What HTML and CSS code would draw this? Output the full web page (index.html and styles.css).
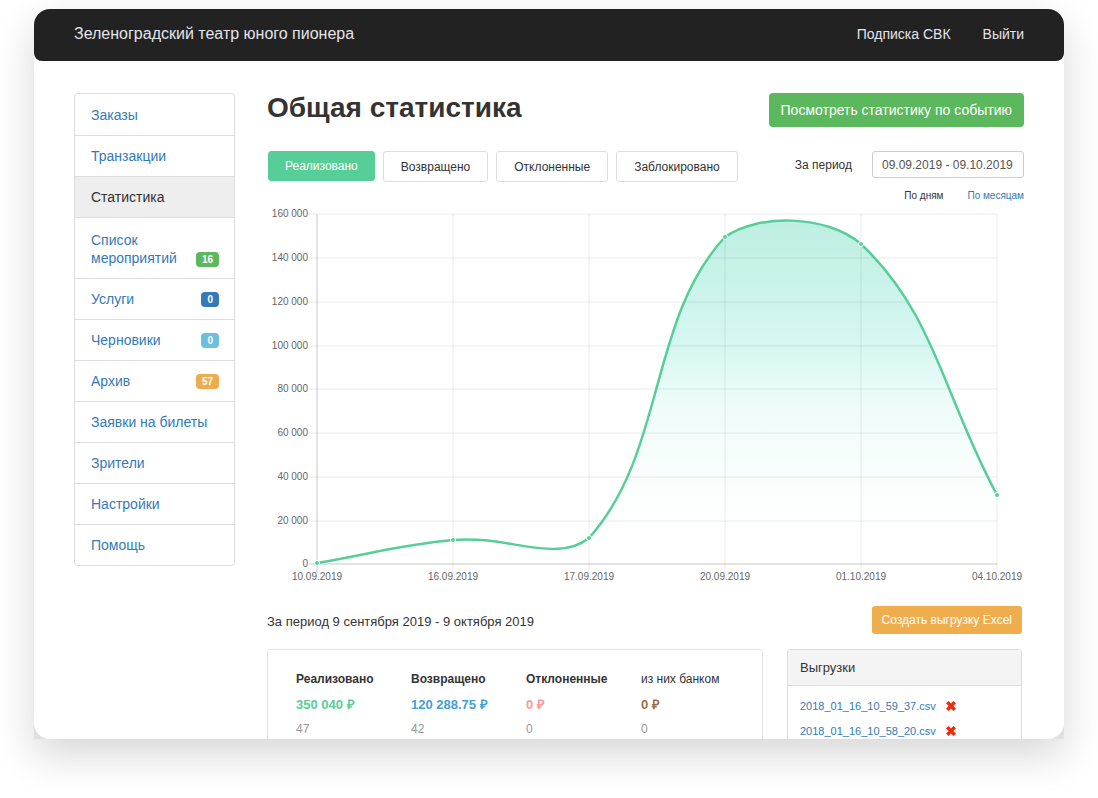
FILE: index.html
```
<!DOCTYPE html>
<html lang="ru">

<head>
    <meta charset="UTF-8">
    <meta name="viewport" content="width=device-width, initial-scale=1.0">
    <title>Общая статистика</title>
    <link rel="stylesheet" href="styles.css">
</head>

<body>
    <div class="window">
        <div class="page">
            <header class="topbar">
                <a class="brand" href="#">Зеленоградский театр юного пионера</a>
                <nav class="topbar-nav">
                    <a href="#">Подписка СВК</a>
                    <a href="#">Выйти</a>
                </nav>
            </header>

            <div class="content">
                <nav class="sidebar">
                    <a href="#">Заказы</a>
                    <a href="#">Транзакции</a>
                    <a class="active" href="#">Статистика</a>
                    <a class="tall" href="#">Список мероприятий <span class="badge green">16</span></a>
                    <a href="#">Услуги <span class="badge blue">0</span></a>
                    <a href="#">Черновики <span class="badge cyan">0</span></a>
                    <a href="#">Архив <span class="badge orange">57</span></a>
                    <a href="#">Заявки на билеты</a>
                    <a href="#">Зрители</a>
                    <a href="#">Настройки</a>
                    <a href="#">Помощь</a>
                </nav>

                <main class="main">
                    <div class="title-row">
                        <h1>Общая статистика</h1>
                        <button class="btn-event" type="button">Посмотреть статистику по событию</button>
                    </div>

                    <div class="filters">
                        <div class="tabs">
                            <button class="tab active" type="button">Реализовано</button>
                            <button class="tab" type="button">Возвращено</button>
                            <button class="tab" type="button">Отклоненные</button>
                            <button class="tab" type="button">Заблокировано</button>
                        </div>
                        <div class="period">
                            <label for="period">За период</label>
                            <input type="text" id="period" value="09.09.2019 - 09.10.2019">
                        </div>
                    </div>

                    <div class="scale">
                        <span>По дням</span>
                        <a href="#">По месяцам</a>
                    </div>

                    <svg class="chart" viewBox="0 0 757 382">
                        <defs>
                            <linearGradient id="fill" gradientUnits="userSpaceOnUse" x1="0" y1="10" x2="0" y2="320">
                                <stop offset="0" stop-color="#bdeee1" />
                                <stop offset="0.4" stop-color="#d4f7f1" />
                                <stop offset="0.62" stop-color="#effcf9" />
                                <stop offset="1" stop-color="#ffffff" />
                            </linearGradient>
                        </defs>
                        <path class="area" fill="url(#fill)" d="M50 358C104 349 131 340 186 335C240 330 290 359 322 333C399 247 381 115 458 32C490 9 559 9 594 39C668 109 676 190 730 290V359H50Z" />
                        <g class="grid">
                            <path d="M42 9H730M42 53H730M42 97H730M42 141H730M42 184H730M42 228H730M42 272H730M42 316H730" />
                            <path d="M186 9V367M322 9V367M458 9V367M594 9V367M730 9V367" />
                        </g>
                        <path class="axis" d="M50 9V367M42 359H730" />
                        <path class="line" d="M50 358C104 349 131 340 186 335C240 330 290 359 322 333C399 247 381 115 458 32C490 9 559 9 594 39C668 109 676 190 730 290" />
                        <g class="dots">
                            <circle cx="50" cy="358" r="2.5" />
                            <circle cx="186" cy="335" r="2.5" />
                            <circle cx="322" cy="333" r="2.5" />
                            <circle cx="458" cy="32" r="2.5" />
                            <circle cx="594" cy="39" r="2.5" />
                            <circle cx="730" cy="290" r="2.5" />
                        </g>
                        <g class="labels-y">
                            <text x="41" y="12">160 000</text>
                            <text x="41" y="56">140 000</text>
                            <text x="41" y="100">120 000</text>
                            <text x="41" y="144">100 000</text>
                            <text x="41" y="187">80 000</text>
                            <text x="41" y="231">60 000</text>
                            <text x="41" y="275">40 000</text>
                            <text x="41" y="319">20 000</text>
                            <text x="41" y="362">0</text>
                        </g>
                        <g class="labels-x">
                            <text x="50" y="375">10.09.2019</text>
                            <text x="186" y="375">16.09.2019</text>
                            <text x="322" y="375">17.09.2019</text>
                            <text x="458" y="375">20.09.2019</text>
                            <text x="594" y="375">01.10.2019</text>
                            <text x="730" y="375">04.10.2019</text>
                        </g>
                    </svg>

                    <div class="summary-head">
                        <h2>За период 9 сентября 2019 - 9 октября 2019</h2>
                        <button class="btn-excel" type="button">Создать выгрузку Excel</button>
                    </div>

                    <div class="summary">
                        <div class="totals">
                            <table>
                                <thead>
                                    <tr>
                                        <th>Реализовано</th>
                                        <th>Возвращено</th>
                                        <th>Отклоненные</th>
                                        <th class="light">из них банком</th>
                                    </tr>
                                </thead>
                                <tbody>
                                    <tr class="sums">
                                        <td class="sold">350 040 ₽</td>
                                        <td class="returned">120 288.75 ₽</td>
                                        <td class="declined">0 ₽</td>
                                        <td class="bank">0 ₽</td>
                                    </tr>
                                    <tr class="counts">
                                        <td>47</td>
                                        <td>42</td>
                                        <td>0</td>
                                        <td>0</td>
                                    </tr>
                                </tbody>
                            </table>
                        </div>

                        <section class="exports">
                            <h3>Выгрузки</h3>
                            <ul>
                                <li>
                                    <a href="#">2018_01_16_10_59_37.csv</a>
                                    <button class="remove" type="button" aria-label="Удалить">
                                        <svg viewBox="0 0 10 10"><path d="M2.6 0L5 2.5L7.4 0L10 2.3L7.4 5L10 7.7L7.4 10L5 7.5L2.6 10L0 7.7L2.6 5L0 2.3Z" /></svg>
                                    </button>
                                </li>
                                <li>
                                    <a href="#">2018_01_16_10_58_20.csv</a>
                                    <button class="remove" type="button" aria-label="Удалить">
                                        <svg viewBox="0 0 10 10"><path d="M2.6 0L5 2.5L7.4 0L10 2.3L7.4 5L10 7.7L7.4 10L5 7.5L2.6 10L0 7.7L2.6 5L0 2.3Z" /></svg>
                                    </button>
                                </li>
                            </ul>
                        </section>
                    </div>
                </main>
            </div>
        </div>
    </div>
</body>

</html>
```

FILE: styles.css
```
* {
    box-sizing: border-box;
}

body {
    margin: 0;
    padding: 9px 34px 59px;
    height: 100vh;
    overflow: hidden;
    background: #fff;
    color: #333;
    font-family: "Liberation Sans", Arial, sans-serif;
    font-size: 14px;
}

a {
    color: #337ab7;
    text-decoration: none;
}

button,
input {
    font-family: inherit;
}

button {
    border: none;
    cursor: pointer;
}

.window {
    height: 100%;
    border-radius: 16px 16px 0 0;
    background: #e0e0e0;
    box-shadow: 0 16px 40px rgba(0, 0, 0, 0.16);
}

.page {
    height: 100%;
    overflow: hidden;
    border-radius: 16px;
    background: #fff;
}

.topbar {
    display: flex;
    justify-content: space-between;
    align-items: center;
    height: 52px;
    padding: 0 40px 3px;
    border-radius: 0 0 8px 8px;
    background: #222;
}

.topbar a {
    color: #e4e4ea;
}

.brand {
    font-size: 16px;
}

.topbar-nav {
    display: flex;
    gap: 32px;
}

.content {
    display: grid;
    grid-template-columns: 161px 1fr;
    align-items: start;
    gap: 32px;
    padding: 32px 40px;
}

/* sidebar */
.sidebar {
    padding-top: 1px;
    border: 1px solid #ddd;
    border-radius: 4px;
}

.sidebar a {
    display: flex;
    justify-content: space-between;
    align-items: center;
    height: 41px;
    padding: 0 15px 0 16px;
    border-bottom: 1px solid #ddd;
    line-height: 18px;
}

.sidebar a:last-child {
    height: 40px;
    border-bottom: none;
}

.sidebar .active {
    background: #eee;
    color: #333;
}

.sidebar .tall {
    align-items: flex-end;
    height: 61px;
    padding-bottom: 11px;
}

.badge {
    padding: 0 6px;
    border-radius: 4px;
    color: #fff;
    font-size: 10px;
    font-weight: bold;
    line-height: 15px;
}

.green {
    background: #5cb85c;
}

.blue {
    background: #337ab7;
}

.cyan {
    background: #6cbfdd;
}

.orange {
    background: #ebad50;
}

/* heading and filters */
.title-row {
    display: flex;
    justify-content: space-between;
    align-items: flex-start;
    height: 58px;
}

h1 {
    margin: 0;
    font-size: 28px;
    line-height: 30px;
}

.btn-event {
    height: 34px;
    padding: 0 12px;
    border-radius: 4px;
    background: #5cb85c;
    color: #fff;
    font-size: 14px;
}

.filters {
    display: flex;
    justify-content: space-between;
    align-items: flex-start;
}

.tabs {
    display: flex;
    align-items: flex-start;
    gap: 8px;
    padding-left: 1px;
}

.tab {
    height: 31px;
    padding: 0 17px;
    border: 1px solid #ddd;
    border-radius: 3px;
    background: #fff;
    color: #333;
    font-size: 12px;
}

.tab.active {
    height: 30px;
    padding: 0 16px;
    border-color: #57ce98;
    background: #57ce98;
    color: #fff;
}

.period {
    display: flex;
    align-items: center;
    gap: 20px;
    font-size: 12px;
}

.period input {
    width: 152px;
    height: 27px;
    padding: 0 9px;
    border: 1px solid #ccc;
    border-radius: 3px;
    color: #555;
    font-size: 12px;
}

.scale {
    display: flex;
    justify-content: flex-end;
    gap: 24px;
    height: 23px;
    padding-top: 8px;
    font-size: 10px;
}

/* chart */
.chart {
    display: block;
    width: 100%;
}

.grid path {
    fill: none;
    stroke: rgba(0, 0, 0, 0.08);
}

.axis {
    fill: none;
    stroke: rgba(0, 0, 0, 0.22);
}

.line {
    fill: none;
    stroke: #57ce98;
    stroke-width: 2.5;
}

.dots circle {
    fill: #57ce98;
    stroke: #fff;
}

.labels-y,
.labels-x {
    fill: #666;
    font-size: 10px;
}

.labels-y {
    text-anchor: end;
}

.labels-x {
    text-anchor: middle;
}

/* totals */
.summary-head {
    display: flex;
    justify-content: space-between;
    align-items: flex-end;
    padding: 19px 2px 15px 0;
}

h2 {
    margin: 0;
    font-size: 13px;
    font-weight: normal;
    line-height: 24px;
}

.btn-excel {
    height: 28px;
    padding: 0 10px;
    border-radius: 3px;
    background: #f0ad4e;
    color: #fff;
    font-size: 12px;
}

.summary {
    display: grid;
    grid-template-columns: 1fr 235px;
    gap: 24px;
    padding-right: 2px;
}

.totals {
    padding: 16px 6px 28px 28px;
    border: 1px solid #e4e4e4;
    border-radius: 3px;
}

table {
    width: 100%;
    border-collapse: collapse;
    table-layout: fixed;
}

th,
td {
    padding: 0;
    height: 25px;
    text-align: left;
    font-size: 12px;
}

.light {
    font-weight: normal;
}

.sums td {
    font-size: 13px;
    font-weight: bold;
}

.sold {
    color: #57ce98;
}

.returned {
    color: #439fd6;
}

.declined {
    color: #f59a9b;
}

.bank {
    color: #9a7042;
}

.counts {
    color: #999;
}

.exports {
    border: 1px solid #ddd;
    border-radius: 3px;
}

.exports h3 {
    margin: 0;
    padding: 0 12px;
    border-bottom: 1px solid #ddd;
    background: #f4f4f4;
    font-size: 13px;
    font-weight: normal;
    line-height: 35px;
}

.exports ul {
    margin: 0;
    padding: 7px 12px;
    list-style: none;
}

.exports li {
    display: flex;
    align-items: center;
    gap: 10px;
    height: 25px;
    font-size: 11px;
}

.remove {
    display: flex;
    padding: 0;
    background: none;
}

.remove svg {
    width: 10px;
    height: 10px;
    fill: #f02b0c;
}
```
